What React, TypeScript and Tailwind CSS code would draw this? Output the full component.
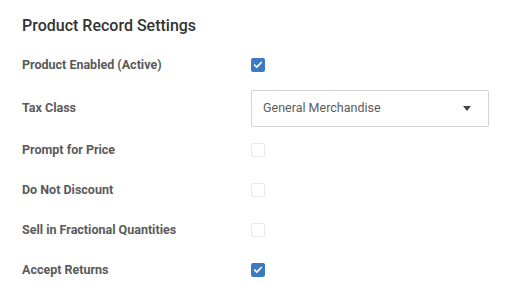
import { Check } from 'lucide-react'

// Single settings checkbox, drawn as a plain box
function Box({ checked }: { checked?: boolean }) {
  return checked ? (
    <div className="w-[14px] h-[14px] rounded-[2px] bg-[#3a7bc2] flex items-center justify-center">
      <Check className="w-[10px] h-[10px] text-white" strokeWidth={4} />
    </div>
  ) : (
    <div className="w-[14px] h-[14px] rounded-[2px] border border-[#e8e8e8] bg-white" />
  )
}

function Row({ label, checked }: { label: string; checked?: boolean }) {
  return (
    <div className="flex items-center h-10">
      <div className="w-[229px] text-[12.5px] font-bold text-[#5a5a5a]">{label}</div>
      <Box checked={checked} />
    </div>
  )
}

export default function App() {
  return (
    <div className="w-[510px] h-[287px] bg-white pl-[22px] overflow-hidden" style={{ fontFamily: 'Roboto, "Liberation Sans", sans-serif' }}>
      <div className="pt-4 pb-[9px] leading-5 text-[16px] font-medium text-[#333]">Product Record Settings</div>

      <Row label="Product Enabled (Active)" checked />

      {/* Tax class select */}
      <div className="flex items-start h-[45px] pt-[5px]">
        <div className="w-[229px] h-[37px] flex items-center text-[12.5px] font-bold text-[#5a5a5a]">Tax Class</div>
        <div className="w-[238px] h-[37px] border border-[#d4d4d4] rounded-[2px] flex items-center justify-between pl-[11px] pr-[17px]">
          <span className="text-[12.5px] text-[#5c5c5c]">General Merchandise</span>
          <svg width="8" height="5" viewBox="0 0 8 5"><path d="M0 0h8L4 5z" fill="#444" /></svg>
        </div>
      </div>

      <Row label="Prompt for Price" />
      <Row label="Do Not Discount" />
      <Row label="Sell in Fractional Quantities" />
      <Row label="Accept Returns" checked />
    </div>
  )
}
